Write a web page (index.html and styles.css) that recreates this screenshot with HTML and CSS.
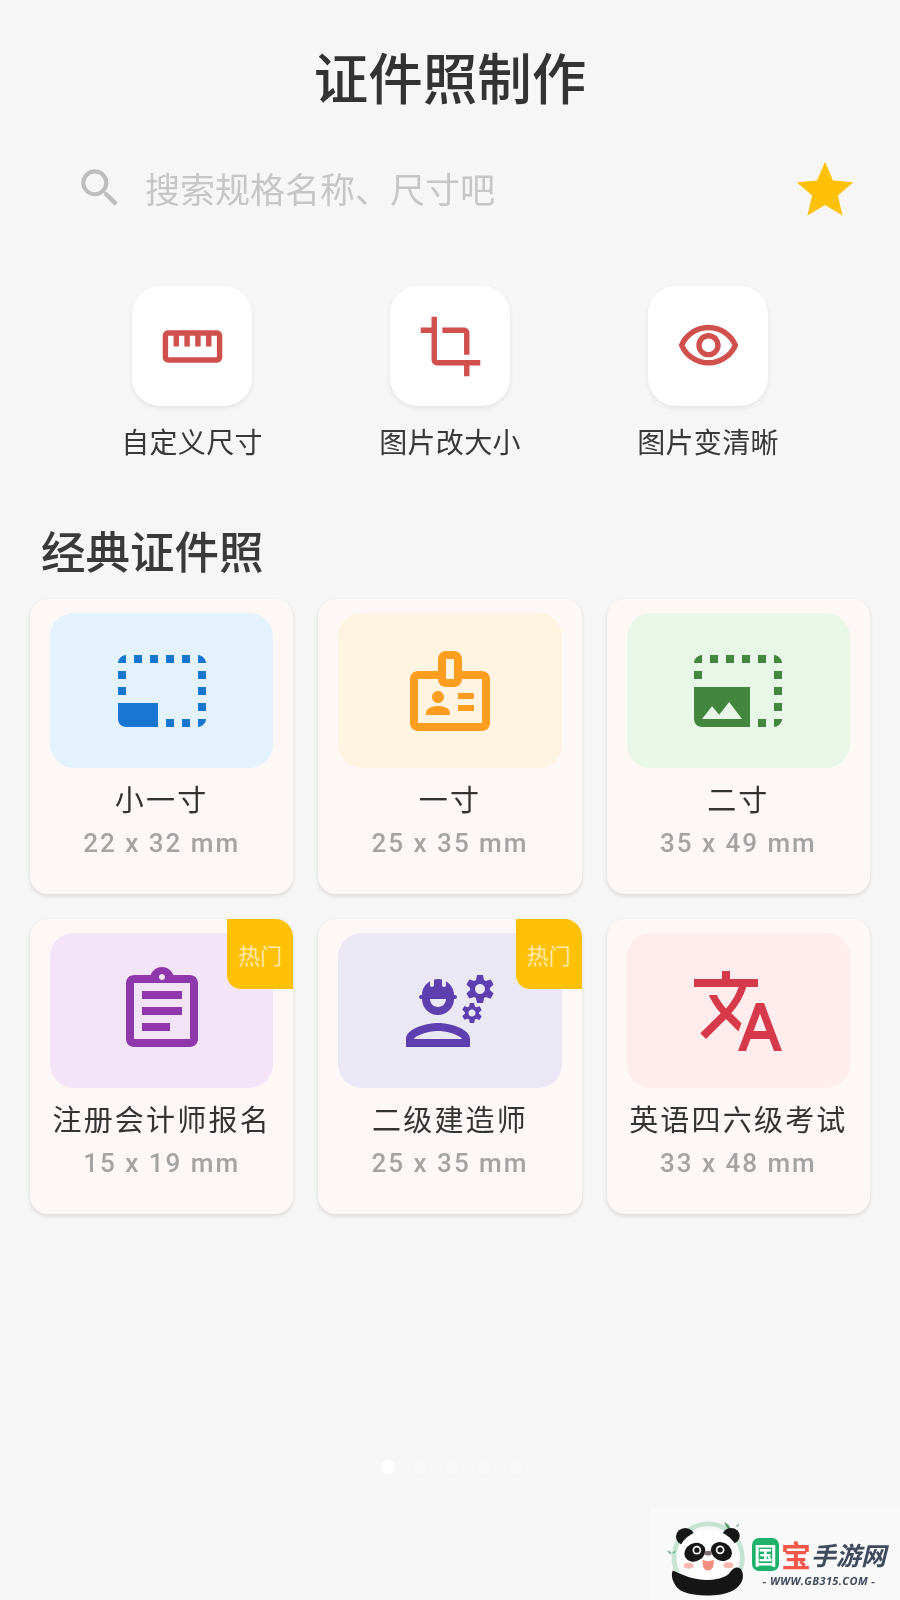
FILE: index.html
```html
<!DOCTYPE html>
<html lang="zh-CN">
<head>
<meta charset="utf-8">
<title>证件照制作</title>
<link rel="stylesheet" href="styles.css">
</head>
<body>
<main class="page">
  <h1 class="title">证件照制作</h1>

  <div class="search">
    <svg class="search-icon" viewBox="0 0 24 24"><path d="M15.5 14h-.79l-.28-.27A6.47 6.47 0 0 0 16 9.5 6.5 6.5 0 1 0 9.5 16c1.61 0 3.09-.59 4.23-1.57l.27.28v.79l5 4.99L20.49 19l-4.99-5zm-6 0C7.01 14 5 11.99 5 9.5S7.01 5 9.5 5 14 7.01 14 9.5 11.99 14 9.5 14z"/></svg>
    <span class="search-text">搜索规格名称、尺寸吧</span>
    <svg class="star" viewBox="0 0 24 24"><path d="M12 17.27L18.18 21l-1.64-7.03L22 9.24l-7.19-.61L12 2 9.19 8.63 2 9.24l5.46 4.73L5.82 21z"/></svg>
  </div>

  <section class="tools">
    <div class="tool">
      <div class="tool-tile"><svg class="tool-icon" viewBox="0 0 24 24"><path d="M21 6H3c-1.1 0-2 .9-2 2v8c0 1.1.9 2 2 2h18c1.1 0 2-.9 2-2V8c0-1.1-.9-2-2-2zm0 10H3V8h2v4h2V8h2v4h2V8h2v4h2V8h2v4h2V8h2v8z"/></svg></div>
      <span class="tool-label">自定义尺寸</span>
    </div>
    <div class="tool">
      <div class="tool-tile"><svg class="tool-icon" viewBox="0 0 24 24"><path d="M17 15h2V7c0-1.1-.9-2-2-2H9v2h8v8zM7 17V1H5v4H1v2h4v10c0 1.1.9 2 2 2h10v4h2v-4h4v-2H7z"/></svg></div>
      <span class="tool-label">图片改大小</span>
    </div>
    <div class="tool">
      <div class="tool-tile"><svg class="tool-icon" viewBox="0 0 24 24"><path d="M12 6c3.79 0 7.17 2.13 8.82 5.5C19.17 14.87 15.79 17 12 17s-7.17-2.13-8.82-5.5C4.83 8.13 8.21 6 12 6m0-2C7 4 2.73 7.11 1 11.5 2.73 15.89 7 19 12 19s9.27-3.11 11-7.5C21.27 7.11 17 4 12 4zm0 5c1.38 0 2.5 1.12 2.5 2.5S13.38 14 12 14s-2.5-1.12-2.5-2.5S10.62 9 12 9m0-2c-2.48 0-4.5 2.02-4.5 4.5S9.52 16 12 16s4.5-2.02 4.5-4.5S14.48 7 12 7z"/></svg></div>
      <span class="tool-label">图片变清晰</span>
    </div>
  </section>

  <h2 class="section-title">经典证件照</h2>

  <section class="cards">
    <article class="card">
      <div class="thumb thumb-blue"><svg class="thumb-icon" viewBox="0 0 24 24"><path d="M23 15h-2v2h2v-2zm0-4h-2v2h2v-2zm0 8h-2v2c1 0 2-1 2-2zM15 3h-2v2h2V3zm8 4h-2v2h2V7zm-2-4v2h2c0-1-1-2-2-2zM3 21h8v-6H1v4c0 1.1.9 2 2 2zM3 7H1v2h2V7zm12 12h-2v2h2v-2zm4-16h-2v2h2V3zm0 16h-2v2h2v-2zM3 3C2 3 1 4 1 5h2V3zm0 8H1v2h2v-2zm8-8H9v2h2V3zM7 3H5v2h2V3z"/></svg></div>
      <div class="card-name">小一寸</div>
      <div class="card-size">22 x 32 mm</div>
    </article>
    <article class="card">
      <div class="thumb thumb-orange"><svg class="thumb-icon" viewBox="0 0 24 24"><path d="M20 7h-5V4c0-1.1-.9-2-2-2h-2c-1.1 0-2 .9-2 2v3H4c-1.1 0-2 .9-2 2v11c0 1.1.9 2 2 2h16c1.1 0 2-.9 2-2V9c0-1.1-.9-2-2-2zM11 7V4h2v5h-2V7zm9 13H4V9h5c0 1.1.9 2 2 2h2c1.1 0 2-.9 2-2h5v11zm-2-7.5h-4V14h4v-1.5zm0 3h-4V17h4v-1.5zM9 15c.83 0 1.5-.67 1.5-1.5S9.83 12 9 12s-1.5.67-1.5 1.5S8.17 15 9 15zm2.08 1.18c-.64-.28-1.34-.43-2.08-.43s-1.44.15-2.08.43C6.36 16.42 6 16.96 6 17.57V18h6v-.43c0-.61-.37-1.15-.92-1.39z"/></svg></div>
      <div class="card-name">一寸</div>
      <div class="card-size">25 x 35 mm</div>
    </article>
    <article class="card">
      <div class="thumb thumb-green"><svg class="thumb-icon" viewBox="0 0 24 24"><path d="M21 15h2v2h-2v-2zm0-4h2v2h-2v-2zm2 8h-2v2c1 0 2-1 2-2zM13 3h2v2h-2V3zm8 4h2v2h-2V7zm0-4v2h2c0-1-1-2-2-2zM1 7h2v2H1V7zm16-4h2v2h-2V3zm0 16h2v2h-2v-2zM3 3C2 3 1 4 1 5h2V3zm6 0h2v2H9V3zM5 3h2v2H5V3zM1 11v8c0 1.1.9 2 2 2h12V11H1zm2 8l2.5-3.21 1.79 2.15 2.5-3.22L13 19H3z"/></svg></div>
      <div class="card-name">二寸</div>
      <div class="card-size">35 x 49 mm</div>
    </article>
    <article class="card">
      <span class="badge">热门</span>
      <div class="thumb thumb-purple"><svg class="thumb-icon" viewBox="0 0 24 24"><path d="M19 3h-4.18C14.4 1.84 13.3 1 12 1s-2.4.84-2.82 2H5c-1.1 0-2 .9-2 2v14c0 1.1.9 2 2 2h14c1.1 0 2-.9 2-2V5c0-1.1-.9-2-2-2zm-7-.25c.41 0 .75.34.75.75s-.34.75-.75.75-.75-.34-.75-.75.34-.75.75-.75zM19 19H5V5h14v14zM7 15h7v2H7zm0-4h10v2H7zm0-4h10v2H7z"/></svg></div>
      <div class="card-name">注册会计师报名</div>
      <div class="card-size">15 x 19 mm</div>
    </article>
    <article class="card">
      <span class="badge">热门</span>
      <div class="thumb thumb-indigo"><svg class="thumb-icon" viewBox="0 0 24 24"><path d="M9 15c-2.67 0-8 1.34-8 4v2h16v-2c0-2.66-5.33-4-8-4zm-6 4c.22-.72 3.31-2 6-2 2.7 0 5.8 1.29 6 2H3zM4.74 9H5c0 2.21 1.79 4 4 4s4-1.79 4-4h.26c.27 0 .49-.22.49-.49v-.02c0-.27-.22-.49-.49-.49H13c0-1.48-.81-2.75-2-3.45v.95c0 .28-.22.5-.5.5s-.5-.22-.5-.5V4.14C9.68 4.06 9.35 4 9 4s-.68.06-1 .14V5.5c0 .28-.22.5-.5.5S7 5.78 7 5.5v-.95C5.81 5.25 5 6.52 5 8h-.26c-.27 0-.49.22-.49.49v.03c0 .26.22.48.49.48zM11 9c0 1.1-.9 2-2 2s-2-.9-2-2h4zM21.98 6.23l.93-.83-.75-1.3-1.19.39c-.14-.11-.3-.2-.47-.27L20.25 3h-1.5l-.25 1.22c-.17.07-.33.16-.48.27l-1.18-.39-.75 1.3.93.83c-.02.17-.02.35 0 .52l-.93.85.75 1.3 1.2-.38c.13.1.28.18.43.25l.28 1.23h1.5l.27-1.22c.16-.07.3-.15.44-.25l1.19.38.75-1.3-.93-.85c.03-.19.02-.36.01-.53zM19.5 7.75c-.69 0-1.25-.56-1.25-1.25s.56-1.25 1.25-1.25 1.25.56 1.25 1.25-.56 1.25-1.25 1.25zM19.4 10.79l-.85.28c-.1-.08-.21-.14-.33-.19L18.04 10h-1.07l-.18.87c-.12.05-.24.12-.34.19l-.84-.28-.54.93.66.59c-.01.13-.01.25 0 .37l-.66.61.54.93.86-.27c.1.07.2.13.31.18l.18.88h1.07l.19-.87c.11-.05.22-.11.32-.18l.85.27.54-.93-.66-.61c.01-.13.01-.25 0-.37l.66-.59-.53-.93zm-1.9 2.6c-.49 0-.89-.4-.89-.89s.4-.89.89-.89.89.4.89.89-.4.89-.89.89z"/></svg></div>
      <div class="card-name">二级建造师</div>
      <div class="card-size">25 x 35 mm</div>
    </article>
    <article class="card">
      <div class="thumb thumb-red"><svg class="thumb-icon" viewBox="0 0 24 24"><path d="M12.87 15.07l-2.54-2.51.03-.03c1.74-1.94 2.98-4.17 3.71-6.53H17V4h-7V2H8v2H1v1.99h11.17C11.5 7.92 10.44 9.75 9 11.35 8.07 10.32 7.3 9.19 6.69 8h-2c.73 1.63 1.73 3.17 2.98 4.56l-5.09 5.02L4 19l5-5 3.11 3.11.76-2.04zM18.5 10h-2L12 22h2l1.12-3h4.75L21 22h2l-4.5-12zm-2.62 7l1.62-4.33L19.12 17h-3.24z"/></svg></div>
      <div class="card-name">英语四六级考试</div>
      <div class="card-size">33 x 48 mm</div>
    </article>
  </section>

  <div class="dots">
    <span class="dot dot-active"></span>
    <span class="dot"></span>
    <span class="dot"></span>
    <span class="dot"></span>
    <span class="dot"></span>
  </div>
</main>

<aside class="watermark">
  <svg class="panda" viewBox="60 40 280 260">
    <path class="panda-ring" d="M112 219 A103 103 0 1 1 298 219" />
    <path class="panda-leaf" d="M254 66 q16 8 20 26 q-16-6-20-26z M286 82 q6-4 12-12 q0 10-12 12z M82 152 q10 2 14 12 q-10-2-14-12z M96 162 q4-6 12-10 q-2 8-12 10z"/>
    <ellipse class="panda-black" cx="136" cy="110" rx="28" ry="26"/>
    <ellipse class="panda-black" cx="274" cy="108" rx="26" ry="24"/>
    <path class="panda-black" d="M98 212 C90 232 104 266 130 276 C170 292 240 292 280 272 C306 258 316 232 306 212 C298 196 276 204 268 222 C240 246 170 246 130 226 Z"/>
    <ellipse class="panda-white" cx="205" cy="165" rx="90" ry="75"/>
    <ellipse class="panda-black" cx="165" cy="157" rx="33" ry="27" transform="rotate(-28 165 157)"/>
    <ellipse class="panda-black" cx="245" cy="155" rx="33" ry="27" transform="rotate(28 245 155)"/>
    <circle class="panda-white" cx="171" cy="151" r="13"/>
    <circle class="panda-black" cx="171" cy="151" r="8"/>
    <circle class="panda-white" cx="241" cy="150" r="13"/>
    <circle class="panda-black" cx="241" cy="150" r="8"/>
    <ellipse class="panda-nose" cx="205" cy="160" rx="11" ry="7"/>
    <path class="panda-mouth" d="M188 180 Q205 188 222 180 Q224 212 205 212 Q186 212 188 180z"/>
    <ellipse class="panda-cheek" cx="146" cy="198" rx="15" ry="9"/>
    <ellipse class="panda-cheek" cx="266" cy="196" rx="15" ry="9"/>
  </svg>
  <div class="brand">
    <div class="brand-row">
      <span class="brand-guo">国</span><span class="brand-bao">宝</span><span class="brand-rest">手游网</span>
    </div>
    <div class="brand-url">- WWW.GB315.COM -</div>
  </div>
</aside>
</body>
</html>
```

FILE: styles.css
```css
* { box-sizing: border-box; }

html, body {
  margin: 0;
  padding: 0;
}

body {
  width: 900px;
  height: 1600px;
  position: relative;
  overflow: hidden;
  background: #f6f6f6;
  font-family: "Noto Sans CJK SC", Roboto, sans-serif;
  color: #3c3c3c;
}

/* The reference is a soft video frame, so everything is slightly softened. */
.page {
  padding-top: 46px;
  filter: blur(0.5px);
}

.title {
  margin: 0;
  font-size: 54.5px;
  line-height: 60px;
  font-weight: 500;
  text-align: center;
  color: #333;
}

.search {
  display: flex;
  align-items: center;
  height: 70px;
  margin-top: 47px;
  padding: 0 41px 0 75px;
}

.search-icon {
  width: 50px;
  height: 50px;
  fill: #bdbdbd;
  flex: none;
}

.search-text {
  margin-left: 20px;
  font-size: 35px;
  line-height: 44px;
  color: #c6c6c6;
}

.star {
  width: 68px;
  height: 68px;
  margin: 3px 0 0 auto;
  fill: #ffc107;
  flex: none;
}

.tools {
  display: grid;
  grid-template-columns: repeat(3, 258px);
  justify-content: center;
  margin-top: 63px;
}

.tool {
  display: flex;
  flex-direction: column;
  align-items: center;
}

.tool-tile {
  display: flex;
  align-items: center;
  justify-content: center;
  width: 120px;
  height: 120px;
  border-radius: 28px;
  background: #fff;
  box-shadow: 0 2px 5px rgba(0, 0, 0, 0.08);
}

.tool-icon {
  width: 65px;
  height: 65px;
  fill: #d0504e;
}

.tool-label {
  margin-top: 15px;
  font-size: 28px;
  line-height: 40px;
  letter-spacing: 0.3px;
  color: #383838;
}

.section-title {
  margin: 59px 0 0;
  padding-left: 41px;
  font-size: 44.5px;
  line-height: 60px;
  font-weight: 500;
  color: #3a3a3a;
}

.cards {
  display: grid;
  grid-template-columns: repeat(3, 1fr);
  gap: 25px;
  margin-top: 19px;
  padding: 0 30px;
}

.card {
  position: relative;
  padding: 14px 20px 33px;
  border-radius: 18px;
  background: #fdf7f5;
  box-shadow: 0 2px 4px rgba(0, 0, 0, 0.12);
  text-align: center;
}

.thumb {
  display: flex;
  align-items: center;
  justify-content: center;
  height: 155px;
  border-radius: 24px;
}

.thumb-icon {
  width: 96px;
  height: 96px;
}

.thumb-blue { background: #e3f2fd; }
.thumb-blue .thumb-icon { fill: #1976d2; }
.thumb-orange { background: #fff4e2; }
.thumb-orange .thumb-icon { fill: #ff9d1e; }
.thumb-green { background: #e9f7e8; }
.thumb-green .thumb-icon { fill: #43873f; }
.thumb-purple { background: #f3e5f7; }
.thumb-purple .thumb-icon { fill: #8e38ab; }
.thumb-indigo { background: #ebe8f6; }
.thumb-indigo .thumb-icon { fill: #5e3fb0; }
.thumb-red { background: #ffedee; }
.thumb-red .thumb-icon { fill: #d5394a; }

.card-name {
  margin-top: 10px;
  font-size: 29px;
  line-height: 40px;
  letter-spacing: 2.2px;
  white-space: nowrap;
  color: #333;
}

.card-size {
  margin-top: 7px;
  font-family: Roboto, sans-serif;
  font-size: 26px;
  font-weight: 500;
  line-height: 36px;
  letter-spacing: 2px;
  color: #a4a4a4;
}

.badge {
  position: absolute;
  top: 0;
  right: 0;
  display: flex;
  align-items: center;
  justify-content: center;
  width: 66px;
  height: 70px;
  border-radius: 0 18px 0 14px;
  background: #ffc107;
  font-size: 22px;
  color: #ffeaa8;
}

.dots {
  display: flex;
  justify-content: center;
  gap: 18px;
  margin-top: 246px;
  padding-left: 4px;
}

.dot {
  width: 14px;
  height: 14px;
  border-radius: 50%;
  background: #f8f8f8;
}

.dot-active {
  background: #fff;
}

.watermark {
  position: absolute;
  left: 650px;
  top: 1507px;
  display: flex;
  width: 250px;
  height: 93px;
  padding: 6px 0 0 10px;
  background: #f9f9f9;
  filter: blur(0.4px);
}

.panda {
  width: 93px;
  height: 87px;
  flex: none;
}

.panda-ring { fill: none; stroke: #c5e5d2; stroke-width: 14; }
.panda-leaf { fill: #4d9a6a; }
.panda-black { fill: #161616; }
.panda-white { fill: #fff; }
.panda-nose { fill: #7d6f70; }
.panda-mouth { fill: #f28f7f; }
.panda-cheek { fill: #f7b9ae; }

.brand {
  display: flex;
  flex-direction: column;
  align-items: flex-start;
  margin-left: -1px;
  padding-top: 24px;
}

.brand-row {
  display: flex;
  align-items: center;
  height: 34px;
}

.brand-guo {
  display: flex;
  align-items: center;
  justify-content: center;
  width: 27px;
  height: 33px;
  border-radius: 7px;
  background: #1fb26c;
  font-size: 23px;
  font-weight: 700;
  color: #fff;
}

.brand-bao {
  margin-left: 2px;
  font-size: 30px;
  line-height: 34px;
  font-weight: 700;
  color: #f0564a;
}

.brand-rest {
  font-size: 25px;
  line-height: 34px;
  font-weight: 700;
  font-style: italic;
  color: #3f4a5c;
}

.brand-url {
  align-self: center;
  margin-top: 3px;
  font-family: "Open Sans", sans-serif;
  font-size: 11px;
  line-height: 14px;
  letter-spacing: 0.4px;
  font-weight: 700;
  font-style: italic;
  color: #3f4a5c;
}
```
